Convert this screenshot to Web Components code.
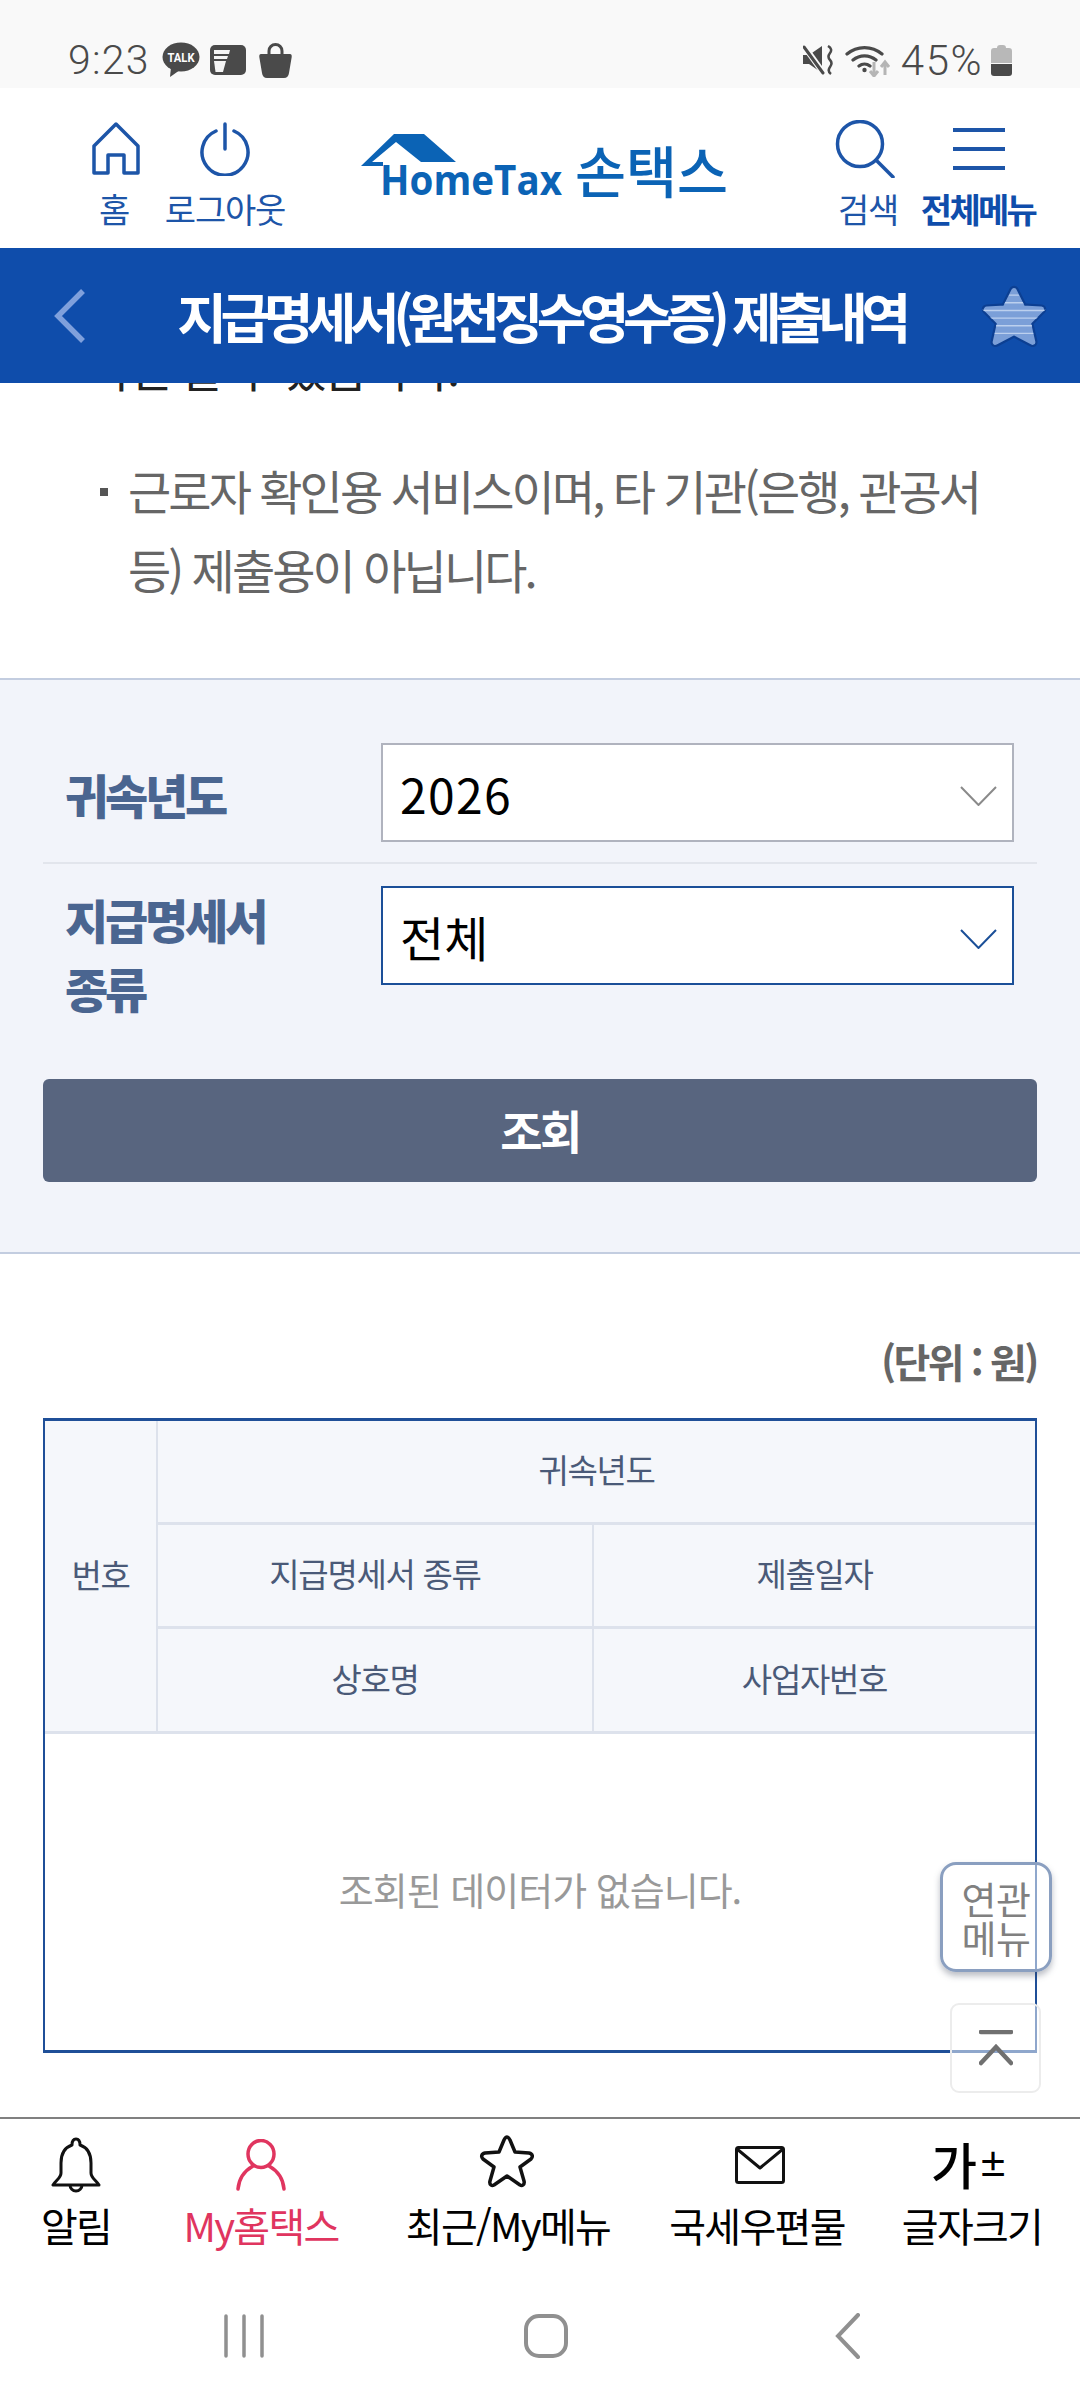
<!DOCTYPE html>
<html lang="ko">
<head>
<meta charset="utf-8">
<title>지급명세서 제출내역</title>
<style>
html, body { margin: 0; padding: 0; background: #fff; }
body { width: 1080px; height: 2400px; overflow: hidden; font-family: "Noto Sans CJK KR", "Noto Sans", sans-serif; }
app-screen { width: 1080px; height: 2400px; }
</style>
</head>
<body>
<app-screen>
  <status-bar slot="top"></status-bar>
  <app-header slot="top"></app-header>
  <title-bar slot="top">지급명세서(원천징수영수증) 제출내역</title-bar>

  <notice-block>
    <span slot="clipped">확인 할 수 있습니다.</span>
    근로자 확인용 서비스이며, 타 기관(은행, 관공서 등) 제출용이 아닙니다.
  </notice-block>
  <search-form>
    <form-row label="귀속년도" divided><select-box value="2026" digits></select-box></form-row>
    <form-row label="지급명세서 종류" tall><select-box value="전체" focused></select-box></form-row>
  </search-form>
  <result-table></result-table>
  <float-buttons></float-buttons>

  <bottom-nav slot="bottom"></bottom-nav>
  <system-nav slot="bottom"></system-nav>
</app-screen>

<script>
class AppScreen extends HTMLElement {
    constructor() {
        super();
        this.attachShadow({ mode: 'open' });
        this.shadowRoot.innerHTML = `
            <style>
                :host { display: flex; flex-direction: column; }
                main { flex: 1; min-height: 0; position: relative; overflow: hidden; background: #fff; }
            </style>
            <slot name="top"></slot>
            <main><slot></slot></main>
            <slot name="bottom"></slot>
        `;
    }
}

class StatusBar extends HTMLElement {
    constructor() {
        super();
        this.attachShadow({ mode: 'open' });
        this.shadowRoot.innerHTML = `
            <style>
                :host { display: flex; align-items: center; height: 88px; box-sizing: border-box; padding: 32px 68px 0 68px; background: #f9f9f9; color: #4a4a4a; font-family: Roboto, "Noto Sans", sans-serif; font-size: 41px; font-weight: 300; }
                .left, .right { display: flex; align-items: center; }
                .right { margin-left: auto; }
                svg { display: block; }
                .time { margin-right: 12px; letter-spacing: 1.200px; }
                .pct { margin: 0 8px 0 10px; letter-spacing: 1.500px; font-size: 42px; }
            </style>
            <div class="left">
                <span class="time">9:23</span>
                <svg width="38" height="36" viewBox="0 0 38 36" style="margin-right:10px">
                    <ellipse cx="19" cy="15" rx="18.5" ry="14.5" fill="#4a4a4a"/>
                    <path d="M9 25 L8 35 L18 28Z" fill="#4a4a4a"/>
                    <text x="19" y="20" text-anchor="middle" font-family="Roboto, sans-serif" font-size="13" font-weight="700" fill="#fff" textLength="27" lengthAdjust="spacingAndGlyphs">TALK</text>
                </svg>
                <svg width="36" height="30" viewBox="0 0 36 30" style="margin-right:13px">
                    <rect x="0" y="0" width="36" height="30" rx="5" fill="#4a4a4a"/>
                    <path d="M4 5 H20 L19 9 H4Z M4 11 H18 L17 14 H4Z" fill="#f4f4f4"/>
                    <path d="M4 16 H16 L13 27 H5.5 Z" fill="#f4f4f4"/>
                </svg>
                <svg width="33" height="35" viewBox="0 0 33 35">
                    <path d="M2 11 H31 Q33 11 32.700 14 L30 30 Q29.300 35 25 35 H8 Q3.700 35 3 30 L.3 14 Q0 11 2 11Z" fill="#4a4a4a"/>
                    <path d="M10 12 V8 A6.500 6.500 0 0 1 23 8 V12" fill="none" stroke="#4a4a4a" stroke-width="3"/>
                </svg>
            </div>
            <div class="right">
                <svg width="31" height="30" viewBox="0 0 31 30" style="margin-right:11px">
                    <path d="M0 10 H6 L19 1 V28 L6 19 H0Z" fill="#4a4a4a"/>
                    <path d="M1 1 L21 29" stroke="#f9f9f9" stroke-width="6"/>
                    <path d="M1 2 L20 28" stroke="#4a4a4a" stroke-width="3" stroke-linecap="round"/>
                    <path d="M25 1 Q30 4 27 8 T27 15 T27 22 T28 29" fill="none" stroke="#4a4a4a" stroke-width="2.500"/>
                </svg>
                <svg width="46" height="34" viewBox="0 0 46 34">
                    <path d="M2 11 A27 27 0 0 1 37 11 M8 17 A18 18 0 0 1 31 17 M14 23 A9 9 0 0 1 25 23" fill="none" stroke="#4a4a4a" stroke-width="3.200" stroke-linecap="round"/>
                    <circle cx="19.500" cy="27" r="2.200" fill="#4a4a4a"/>
                    <path d="M29 19 V32 M25 28 L29 33 L33 28 M40 32 V20 M36 24 L40 19 L44 24" fill="none" stroke="#b5b5b5" stroke-width="3"/>
                </svg>
                <span class="pct">45%</span>
                <svg width="21" height="31" viewBox="0 0 21 31">
                    <path d="M6 3 Q6 0 9 0 H12 Q15 0 15 3 H18 Q21 3 21 6 V18 H0 V6 Q0 3 3 3Z" fill="#b8b8b8"/>
                    <path d="M0 19 H21 V28 Q21 31 18 31 H3 Q0 31 0 28Z" fill="#4a4a4a"/>
                </svg>
            </div>
        `;
    }
}

class HeaderAction extends HTMLElement {
    constructor() {
        super();
        this.attachShadow({ mode: 'open' });
        this.shadowRoot.innerHTML = `
            <style>
                :host { display: flex; flex-direction: column; align-items: center; color: #1d55a8; font-size: 34px; letter-spacing: -1.200px; white-space: nowrap; }
                :host([strong]) { font-weight: 700; color: #0f4dab; letter-spacing: -2.700px; }
                .icon { height: 60px; display: flex; align-items: center; }
                .label { line-height: 40px; margin-top: 10px; }
            </style>
            <div class="icon"><slot></slot></div>
            <div class="label">${this.getAttribute('label')}</div>
        `;
    }
}

class AppHeader extends HTMLElement {
    constructor() {
        super();
        this.attachShadow({ mode: 'open' });
        this.shadowRoot.innerHTML = `
            <style>
                :host { display: flex; height: 160px; box-sizing: border-box; padding: 31px 0 0 54px; background: #fff; }
                header-action { width: 120px; }
                .logout { width: 102px; }
                .logo { width: 370px; height: 70px; margin: 14px 0 0 85px; display: block; flex: none; }
                .search { width: 112px; margin-left: 81px; }
                .search svg { margin-left: -6px; }
                .menu { width: 112px; margin-left: -2px; }
                svg { display: block; }
            </style>
            <header-action label="홈">
                <svg width="50" height="54" viewBox="0 0 50 54" fill="none" stroke="#1d55a8" stroke-width="3.500" stroke-linejoin="round" style="margin-left:4px">
                    <path d="M25 2 L47 24 V51 H33 V33 H17 V51 H3 V24Z"/>
                </svg>
            </header-action>
            <header-action class="logout" label="로그아웃">
                <svg width="50" height="54" viewBox="0 0 50 54" fill="none" stroke="#1d55a8" stroke-width="3.500" stroke-linecap="round">
                    <path d="M25 2 V27"/>
                    <path d="M16 9 A23 23 0 1 0 34 9"/>
                </svg>
            </header-action>
            <svg class="logo" viewBox="0 0 370 70">
                <path d="M33 1 H63 L95 29 H60 L35 9 L11 29 H22 V33 H0 Z" fill="#0b63b5"/>
                <text x="19" y="62" font-family="'Open Sans', sans-serif" font-size="42" font-weight="700" fill="#0b63b5" textLength="182" lengthAdjust="spacingAndGlyphs">HomeTax</text>
                <text x="214" y="60" font-family="'Noto Sans CJK KR', sans-serif" font-size="56" font-weight="500" fill="#0b63b5" textLength="153" lengthAdjust="spacingAndGlyphs">손택스</text>
            </svg>
            <header-action class="search" label="검색">
                <svg width="60" height="58" viewBox="0 0 60 58" fill="none" stroke="#1d55a8" stroke-width="3.500" stroke-linecap="round">
                    <circle cx="25" cy="24" r="22.500"/>
                    <path d="M41 40 L58 57"/>
                </svg>
            </header-action>
            <header-action class="menu" label="전체메뉴" strong>
                <svg width="52" height="44" viewBox="0 0 52 44" fill="none" stroke="#1d55a8" stroke-width="4" style="margin-left:1px">
                    <path d="M0 3 H52 M0 22 H52 M0 41 H52"/>
                </svg>
            </header-action>
        `;
    }
}

class TitleBar extends HTMLElement {
    constructor() {
        super();
        this.attachShadow({ mode: 'open' });
        const star = 'M32 8 L40 24 L57 25 L45 37 L49 55 L32 46 L15 55 L19 37 L7 25 L24 24Z';
        this.shadowRoot.innerHTML = `
            <style>
                :host { display: flex; align-items: center; height: 135px; box-sizing: border-box; padding: 0 31px 0 53px; background: #0f4dab; position: relative; z-index: 1; }
                h1 { flex: 1; margin: 0; padding-left: 17px; color: #fff; text-align: center; font-size: 54px; font-weight: 700; letter-spacing: -6.500px; white-space: nowrap; line-height: 60px; }
                svg { display: block; flex: none; }
            </style>
            <svg width="33" height="54" viewBox="0 0 33 54" fill="none" stroke="#7fa0dc" stroke-width="5.500" stroke-linejoin="miter"><path d="M30 2 L5 27 L30 52"/></svg>
            <h1><slot></slot></h1>
            <svg width="70" height="70" viewBox="0 0 64 64" style="margin-top:2px">
                <defs>
                    <clipPath id="s"><path d="M32 4 L42 22 L62 24 L48 38 L52 60 L32 50 L12 60 L16 38 L2 24 L22 22Z"/></clipPath>
                </defs>
                <path d="${star}" fill="#0c3f92" stroke="#0c3f92" stroke-width="9" stroke-linejoin="round"/>
                <path d="${star}" fill="#7b9fd8" stroke="#7b9fd8" stroke-width="5" stroke-linejoin="round"/>
                <g clip-path="url(#s)" stroke="#bcd0ee" stroke-width="1.300">
                    <path d="M0 12 H64 M0 19 H64 M0 26 H64 M0 33 H64 M0 40 H64 M0 47 H64"/>
                </g>
            </svg>
        `;
    }
}

class NoticeBlock extends HTMLElement {
    constructor() {
        super();
        this.attachShadow({ mode: 'open' });
        this.shadowRoot.innerHTML = `
            <style>
                :host { display: block; height: 295px; box-sizing: border-box; overflow: hidden; font-size: 47px; letter-spacing: -2.900px; }
                .clip { margin: -46px 0 0 88px; line-height: 60px; color: #222; white-space: nowrap; letter-spacing: -2.400px; }
                .item { position: relative; margin: 53px 90px 0 128px; line-height: 79px; color: #666; }
                .item::before { content: ""; position: absolute; left: -28px; top: 38px; width: 8px; height: 8px; background: #555; }
            </style>
            <div class="clip"><slot name="clipped"></slot></div>
            <div class="item"><slot></slot></div>
        `;
    }
}

class SelectBox extends HTMLElement {
    constructor() {
        super();
        this.attachShadow({ mode: 'open' });
        this.shadowRoot.innerHTML = `
            <style>
                :host { display: flex; align-items: center; height: 99px; box-sizing: border-box; padding: 1px 0 0 17px; border: 2px solid #b0b3be; background: #fff; color: #000; font-size: 48px; position: relative; --arrow: #8a8a8a; }
                :host([focused]) { border-color: #1b4f98; --arrow: #1b4f98; }
                :host([digits]) { letter-spacing: 1.400px; padding-top: 0; }
                svg { position: absolute; right: 15px; top: 41px; }
            </style>
            <span>${this.getAttribute('value')}</span>
            <svg width="37" height="20" viewBox="0 0 37 20" fill="none" stroke="var(--arrow)" stroke-width="2"><path d="M1 1 L18.500 19 L36 1"/></svg>
        `;
    }
}

class FormRow extends HTMLElement {
    constructor() {
        super();
        this.attachShadow({ mode: 'open' });
        const label = this.getAttribute('label').split(' ').join('<br>');
        this.shadowRoot.innerHTML = `
            <style>
                :host { display: grid; grid-template-columns: 338px 633px; align-items: center; }
                :host([divided]) { padding-bottom: 20px; border-bottom: 2px solid #e2e5ec; margin-bottom: 22px; }
                :host([tall]) { align-items: start; }
                .label { padding-left: 22px; padding-top: 2px; color: #4a6590; font-size: 47px; font-weight: 900; letter-spacing: -3.200px; line-height: 70px; white-space: nowrap; }
                :host([tall]) .label { padding-top: 0; margin-top: -2px; line-height: 69px; }
            </style>
            <div class="label">${label}</div>
            <slot></slot>
        `;
    }
}

class SearchForm extends HTMLElement {
    constructor() {
        super();
        this.attachShadow({ mode: 'open' });
        this.shadowRoot.innerHTML = `
            <style>
                :host { display: block; box-sizing: border-box; height: 576px; padding: 63px 43px 0; background: #f2f4fa; border-top: 2px solid #c3cde0; border-bottom: 2px solid #c3cde0; }
                button { display: block; width: 100%; height: 103px; margin-top: 57px; padding: 0 0 4px; border: 0; border-radius: 6px; background: #58657f; color: #fff; font: 700 46px "Noto Sans CJK KR", sans-serif; letter-spacing: -2.500px; }
            </style>
            <slot></slot>
            <button type="button">조회</button>
        `;
    }
}

class ResultTable extends HTMLElement {
    constructor() {
        super();
        this.attachShadow({ mode: 'open' });
        this.shadowRoot.innerHTML = `
            <style>
                :host { display: block; margin: 0 43px; }
                .unit { height: 164px; box-sizing: border-box; padding-top: 81px; line-height: 52px; text-align: right; color: #666; font-size: 40px; font-weight: 700; letter-spacing: -2.500px; }
                .table { height: 635px; box-sizing: border-box; border: solid #1f4f98; border-width: 3px 2px; display: flex; flex-direction: column; }
                .head { display: grid; grid-template-columns: 111px 436px 1fr; grid-template-rows: 104px 104px 102px; background: #f5f7fb; color: #4a5a78; font-size: 33px; letter-spacing: -1.300px; border-bottom: 3px solid #dde2ec; }
                .head div { display: flex; align-items: center; justify-content: center; box-sizing: border-box; padding-bottom: 5px; border-left: 2px solid #dde2ec; border-bottom: 3px solid #dde2ec; }
                .head .no { grid-row: 1 / 4; border-left: 0; border-bottom: 0; }
                .head .wide { grid-column: 2 / 4; }
                .head .last { border-bottom: 0; padding-bottom: 4px; }
                .empty { flex: 1; display: flex; align-items: center; justify-content: center; color: #999; font-size: 38px; letter-spacing: -1px; padding-bottom: 8px; }
            </style>
            <div class="unit">(단위 : 원)</div>
            <div class="table">
                <div class="head">
                    <div class="no">번호</div>
                    <div class="wide">귀속년도</div>
                    <div>지급명세서 종류</div>
                    <div>제출일자</div>
                    <div class="last">상호명</div>
                    <div class="last">사업자번호</div>
                </div>
                <div class="empty">조회된 데이터가 없습니다.</div>
            </div>
        `;
    }
}

class FloatButtons extends HTMLElement {
    constructor() {
        super();
        this.attachShadow({ mode: 'open' });
        this.shadowRoot.innerHTML = `
            <style>
                :host { position: absolute; right: 28px; top: 1479px; display: flex; flex-direction: column; align-items: flex-end; gap: 31px; }
                .rel { width: 112px; height: 110px; box-sizing: border-box; display: flex; align-items: center; justify-content: center; text-align: center; border: 3px solid #8a9fc0; border-radius: 16px; background: rgba(255,255,255,.5); box-shadow: 0 4px 6px rgba(60,70,90,.35); color: #808080; font-size: 38px; line-height: 39px; letter-spacing: -.5px; }
                .top { width: 91px; height: 90px; margin-right: 11px; box-sizing: border-box; display: flex; align-items: center; justify-content: center; border: 2px solid #ececec; border-radius: 9px; background: rgba(255,255,255,.5); }
            </style>
            <div class="rel">연관<br>메뉴</div>
            <div class="top">
                <svg width="34" height="36" viewBox="0 0 34 36" fill="none" stroke="#707070" stroke-width="4.500" stroke-linecap="round">
                    <path d="M2 2 H32"/>
                    <path d="M2 33 L17 17 L32 33"/>
                </svg>
            </div>
        `;
    }
}

class NavItem extends HTMLElement {
    constructor() {
        super();
        this.attachShadow({ mode: 'open' });
        this.shadowRoot.innerHTML = `
            <style>
                :host { display: flex; flex-direction: column; align-items: center; color: #000; font-size: 40px; letter-spacing: -1.700px; white-space: nowrap; }
                :host([active]) { color: #e0355f; }
                .icon { height: 60px; width: 100%; display: flex; align-items: center; justify-content: center; }
                .label { line-height: 44px; margin-top: 8px; }
            </style>
            <div class="icon"><slot></slot></div>
            <div class="label">${this.getAttribute('label')}</div>
        `;
    }
}

class BottomNav extends HTMLElement {
    constructor() {
        super();
        this.attachShadow({ mode: 'open' });
        this.shadowRoot.innerHTML = `
            <style>
                :host { display: grid; grid-template-columns: 152px 218px 276px 222px 208px; height: 155px; box-sizing: border-box; padding-top: 16px; border-top: 2px solid #808080; background: #fff; }
                .size { font-size: 50px; font-weight: 500; letter-spacing: -1px; color: #000; display: flex; align-items: center; line-height: 50px; margin: -4px 0 0 -6px; }
                .size span { font-size: 30px; font-weight: 700; margin-left: 2px; }
            </style>
            <nav-item label="알림">
                <svg width="50" height="56" viewBox="0 0 50 56" fill="none" stroke="#111" stroke-width="3" stroke-linejoin="round">
                    <path d="M25 2 C22 2 21 5 21 8 C12 11 10 18 10 26 V36 C10 41 5 43 2 48 H48 C45 43 40 41 40 36 V26 C40 18 38 11 29 8 C29 5 28 2 25 2Z"/>
                    <path d="M19 48 A6 6 0 0 0 31 48"/>
                </svg>
            </nav-item>
            <nav-item label="My홈택스" active>
                <svg width="50" height="52" viewBox="0 0 50 52" fill="none" stroke="#e0355f" stroke-width="3.500" stroke-linecap="round">
                    <ellipse cx="25" cy="15" rx="13" ry="13.500"/>
                    <path d="M2 50 C3 38 10 31 17 27 M48 50 C47 38 40 31 33 27"/>
                </svg>
            </nav-item>
            <nav-item label="최근/My메뉴">
                <svg width="56" height="54" viewBox="0 0 56 54" fill="none" stroke="#111" stroke-width="3.500" stroke-linejoin="round" style="margin:-8px 0 0 -2px">
                    <path d="M28 3 C29 3 30 4 31 6 L36 18 L50 19 C54 20 54 23 52 25 L41 33 L45 47 C46 51 43 52 41 51 L28 42 L15 51 C13 52 10 51 11 47 L15 33 L4 25 C2 23 2 20 6 19 L20 18 L25 6 C26 4 27 3 28 3Z"/>
                </svg>
            </nav-item>
            <nav-item label="국세우편물">
                <svg width="50" height="38" viewBox="0 0 50 38" fill="none" stroke="#111" stroke-width="3" stroke-linejoin="round" style="margin-left:5px">
                    <rect x="1.500" y="1.500" width="47" height="35" rx="2"/>
                    <path d="M2 3 L25 22 L48 3"/>
                </svg>
            </nav-item>
            <nav-item label="글자크기">
                <div class="size">가<span>±</span></div>
            </nav-item>
        `;
    }
}

class SystemNav extends HTMLElement {
    constructor() {
        super();
        this.attachShadow({ mode: 'open' });
        this.shadowRoot.innerHTML = `
            <style>
                :host { display: grid; grid-template-columns: repeat(3, 302px); justify-content: center; align-items: center; height: 128px; padding-left: 12px; background: #fff; }
                div { display: flex; justify-content: center; }
                svg { display: block; }
            </style>
            <div><svg width="40" height="44" viewBox="0 0 40 44" fill="none" stroke="#909090" stroke-width="3.500" stroke-linecap="round"><path d="M2 2 V42 M20 2 V42 M38 2 V42"/></svg></div>
            <div><svg width="44" height="44" viewBox="0 0 44 44" fill="none" stroke="#909090" stroke-width="4"><rect x="2" y="2" width="40" height="40" rx="13"/></svg></div>
            <div><svg width="26" height="46" viewBox="0 0 26 46" fill="none" stroke="#909090" stroke-width="4" stroke-linecap="round"><path d="M23 2 L3 23 L23 44"/></svg></div>
        `;
    }
}

customElements.define('app-screen', AppScreen);
customElements.define('status-bar', StatusBar);
customElements.define('header-action', HeaderAction);
customElements.define('app-header', AppHeader);
customElements.define('title-bar', TitleBar);
customElements.define('notice-block', NoticeBlock);
customElements.define('select-box', SelectBox);
customElements.define('form-row', FormRow);
customElements.define('search-form', SearchForm);
customElements.define('result-table', ResultTable);
customElements.define('float-buttons', FloatButtons);
customElements.define('nav-item', NavItem);
customElements.define('bottom-nav', BottomNav);
customElements.define('system-nav', SystemNav);
</script>
</body>
</html>
